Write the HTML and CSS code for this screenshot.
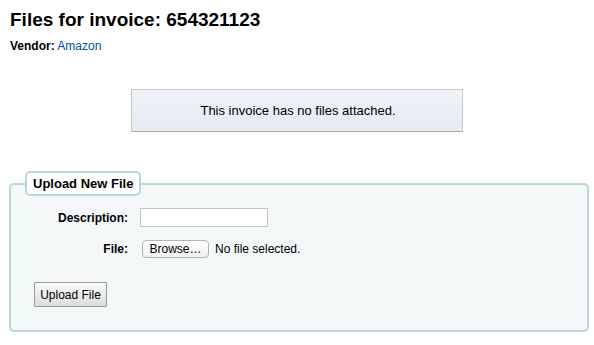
FILE: index.html
```html
<!DOCTYPE html>
<html lang="en">
<head>
    <meta charset="UTF-8">
    <meta name="viewport" content="width=device-width, initial-scale=1.0">
    <title>Files for invoice: 654321123</title>
    <link rel="stylesheet" href="styles.css">
</head>
<body>
    <h1>Files for invoice: 654321123</h1>
    <p class="vendor"><strong>Vendor:</strong> <a href="#">Amazon</a></p>

    <!-- Message box -->
    <div class="dialog">This invoice has no files attached.</div>

    <!-- Upload form -->
    <form class="upload-form" onsubmit="return false;">
        <fieldset>
            <legend>Upload New File</legend>
            <div class="form-row">
                <label for="description">Description:</label>
                <input type="text" id="description" name="description" />
            </div>
            <div class="form-row">
                <label>File:</label>
                <button type="button" class="btn-browse">Browse…</button>
                <span class="file-status">No file selected.</span>
            </div>
            <div class="form-actions">
                <button type="submit" class="btn-upload">Upload File</button>
            </div>
        </fieldset>
    </form>
</body>
</html>
```

FILE: styles.css
```css
/* Basic Reset */
* {
    margin: 0;
    padding: 0;
    box-sizing: border-box;
}

body {
    font-family: "Liberation Sans", Arial, sans-serif;
    font-size: 12px;
    color: #000;
    background-color: #fff;
    padding: 8px 5px 0 9px;
}

h1 {
    font-size: 19px;
    line-height: 24px;
    font-weight: bold;
    margin-left: 1px;
}

.vendor {
    font-size: 12px;
    line-height: 16px;
    margin-top: 6px;
    margin-left: 1px;
}

.vendor a {
    color: #004d99;
    text-decoration: none;
}

.dialog {
    width: 332px;
    height: 43px;
    margin: 35px auto 0;
    padding-left: 2px;
    font-size: 13px;
    line-height: 41px;
    text-align: center;
    background: linear-gradient(#f1f3f9, #e5e9f2);
    border: 1px solid #c6c8cc;
    border-bottom-color: #a9abae;
    position: relative;
    left: -2px;
}

.upload-form {
    margin-top: 39px;
    width: 580px;
}

fieldset {
    border: 2px solid #b9d8d9;
    border-radius: 5px;
    background-color: #f4f8f9;
    padding: 6px 14px 23px 14px;
}

legend {
    font-size: 13px;
    font-weight: bold;
    line-height: 21px;
    padding: 0 6px;
    background-color: #fff;
    border: 2px solid #b9d8d9;
    border-radius: 5px;
}

.form-row {
    display: flex;
    align-items: center;
    height: 31px;
}

.form-row label {
    width: 103px;
    text-align: right;
    font-weight: bold;
    margin-right: 12px;
}

.form-row input {
    width: 128px;
    height: 19px;
    border: 1px solid #c4c4c4;
    background-color: #fff;
    font-size: 12px;
}

.btn-browse {
    margin-left: 2px;
    width: 67px;
    height: 18px;
    font-family: inherit;
    font-size: 12px;
    background: linear-gradient(#ffffff, #f0f0f0);
    border: 1px solid #b4b4b4;
    border-radius: 4px;
    color: #000;
}

.file-status {
    margin-left: 6px;
}

.form-actions {
    margin-top: 18px;
    margin-left: 9px;
}

.btn-upload {
    width: 73px;
    height: 25px;
    font-family: inherit;
    font-size: 12px;
    color: #000;
    background: linear-gradient(#fafafa, #dcdcdc);
    border: 1px solid #9a9a9a;
    border-radius: 1px;
}
```
